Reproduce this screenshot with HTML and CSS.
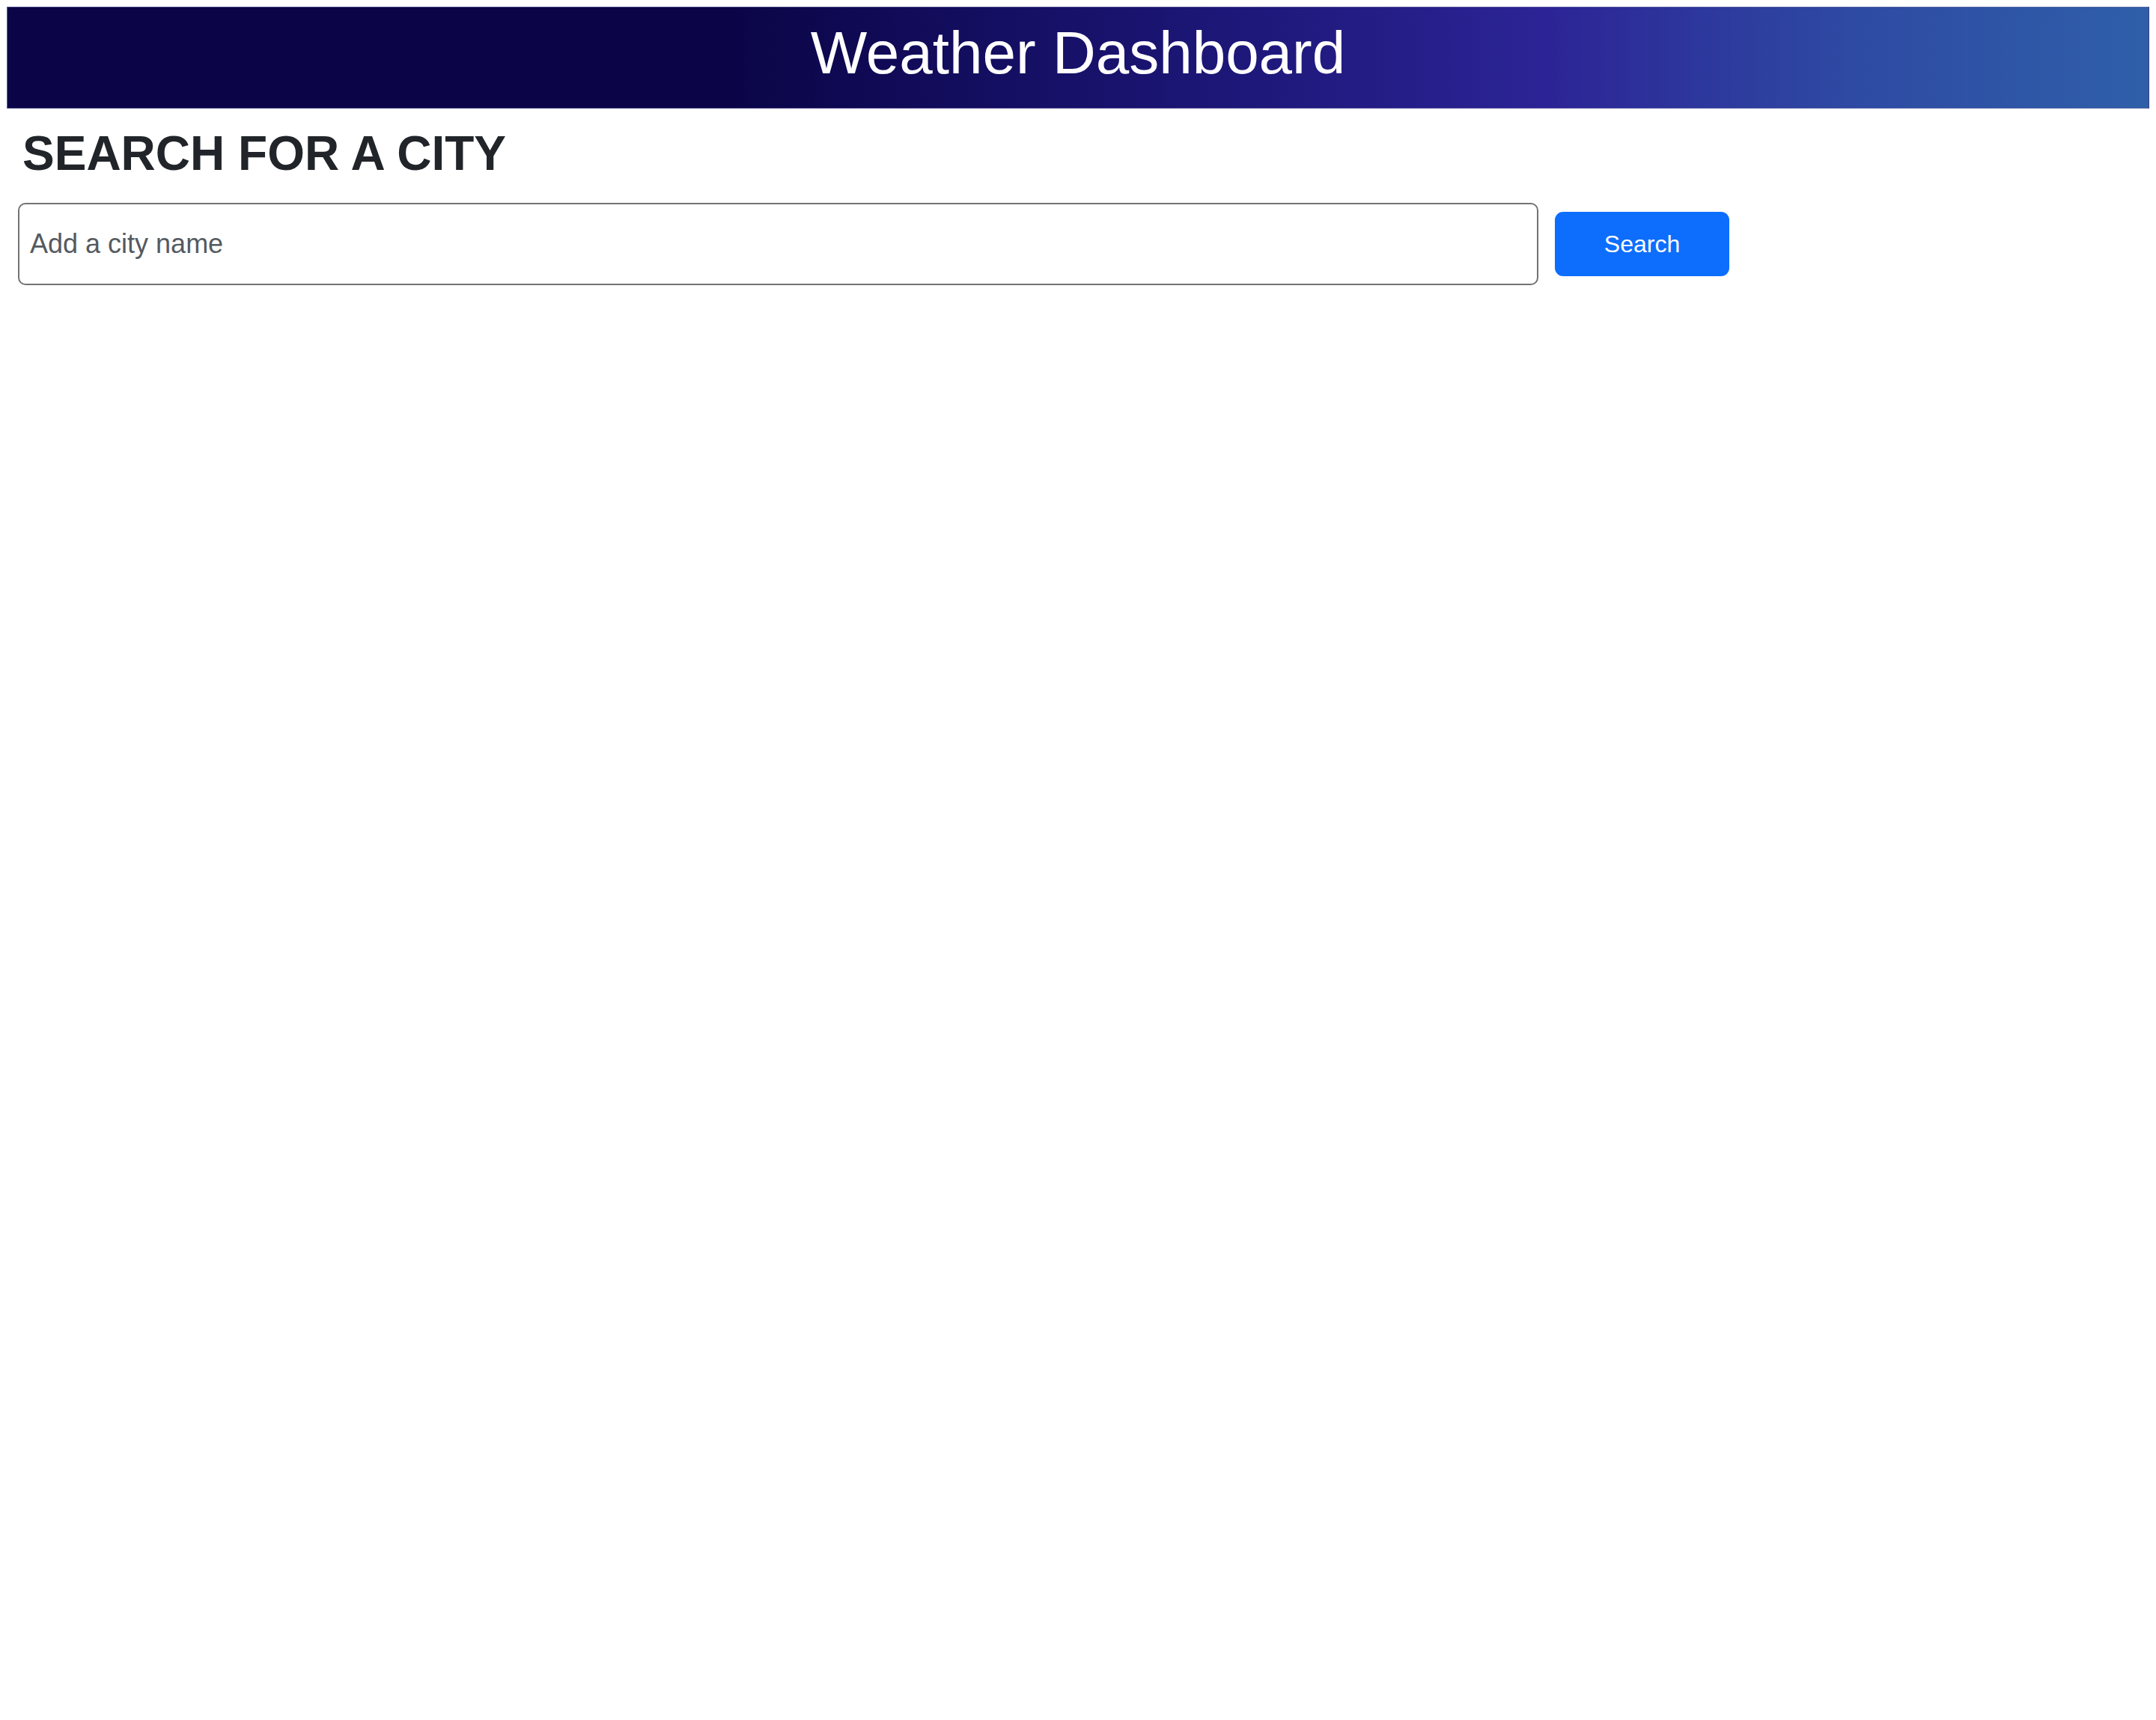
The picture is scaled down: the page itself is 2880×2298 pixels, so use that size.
FILE: index.html
```html
<!DOCTYPE html>
<html lang="en">
<head>
<meta charset="utf-8">
<title>Weather Dashboard</title>
<link rel="stylesheet" href="styles.css">
</head>
<body>
<header class="banner">
  <h1 class="banner-title">Weather Dashboard</h1>
</header>
<main class="content">
  <h2 class="search-heading">SEARCH FOR A CITY</h2>
  <form class="search-form">
    <input class="city-input" type="text" placeholder="Add a city name">
    <button class="search-btn" type="button">Search</button>
  </form>
</main>
</body>
</html>
```

FILE: styles.css
```css
html, body {
  background: #ffffff;
}
body {
  margin: 9px;
  font-family: "Liberation Sans", Arial, sans-serif;
  color: #212529;
}
.banner {
  box-sizing: border-box;
  height: 136px;
  padding: 15px 0 28px;
  border: 1px solid rgba(110, 110, 160, 0.55);
  background: linear-gradient(90deg, #0b0548 0%, #0b0548 34%, #1c1676 56%, #2c2496 72%, #2e4aa3 86%, #2f5fa9 100%);
  text-align: center;
}
.banner-title {
  margin: 0;
  font-size: 80px;
  line-height: 92px;
  font-weight: 400;
  color: #ffffff;
}
.content {
  padding: 0 15px;
}
.search-heading {
  margin: 24px 0 30px 6px;
  font-size: 64px;
  line-height: 72px;
  font-weight: 700;
  color: #212529;
}
.search-form {
  display: flex;
  align-items: center;
  gap: 22px;
  margin: 0;
}
.city-input {
  box-sizing: border-box;
  flex: 0 0 2031px;
  height: 110px;
  padding: 0 14px;
  border: 2px solid #737373;
  border-radius: 10px;
  font-family: "Liberation Sans", Arial, sans-serif;
  font-size: 36px;
  color: #212529;
  background: #ffffff;
  outline: none;
}
.city-input::placeholder {
  color: #555a60;
  opacity: 1;
}
.search-btn {
  box-sizing: border-box;
  width: 233px;
  height: 86px;
  border: none;
  border-radius: 11px;
  background: #0d6efd;
  color: #ffffff;
  font-family: "Liberation Sans", Arial, sans-serif;
  font-size: 32px;
  cursor: pointer;
}
```
